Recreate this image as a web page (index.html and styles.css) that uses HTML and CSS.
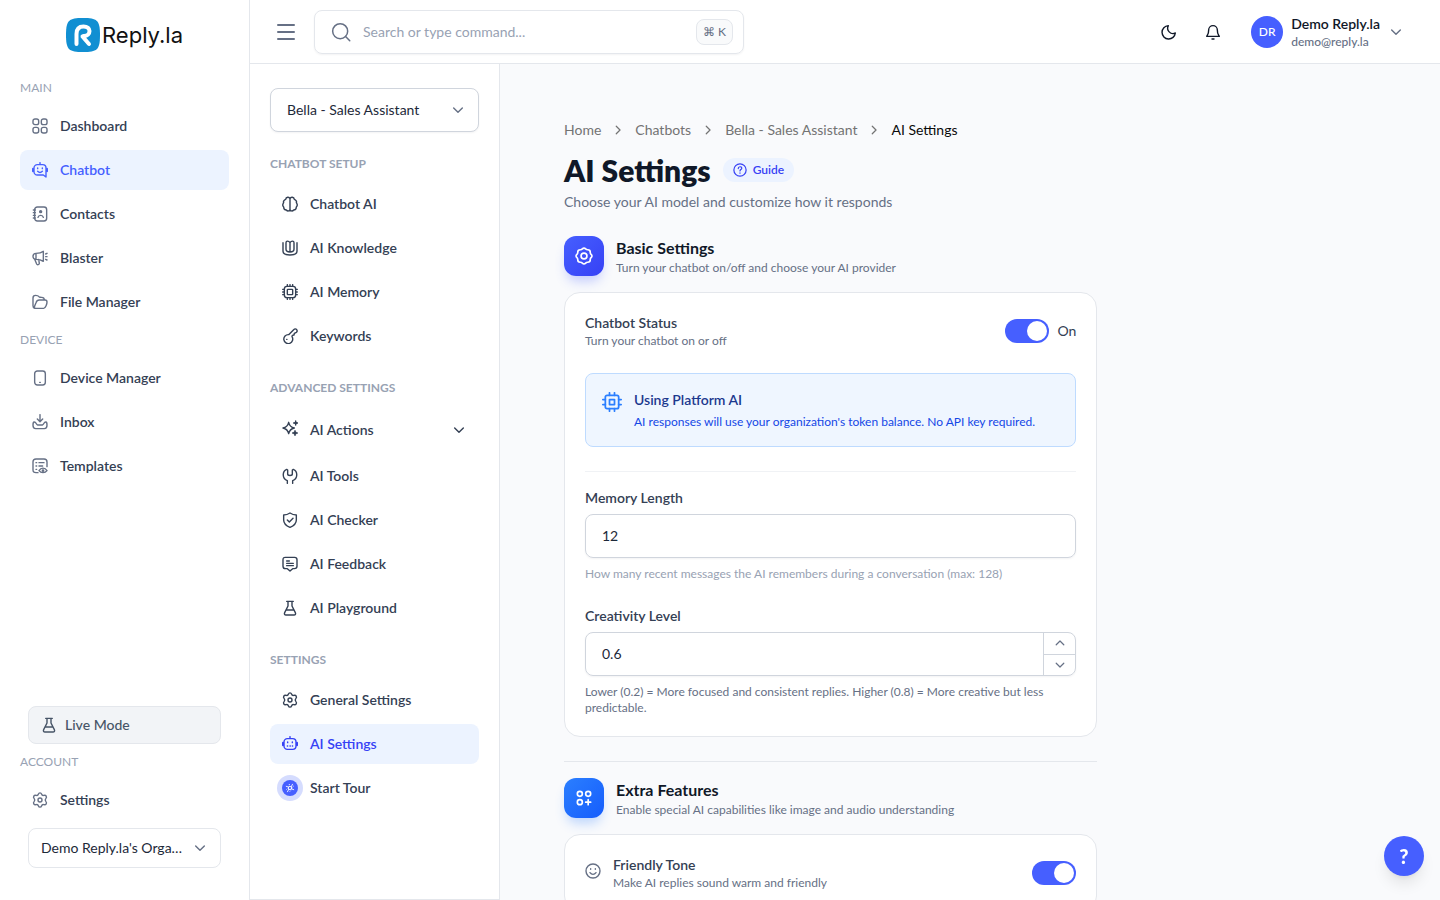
FILE: index.html
```html
<!DOCTYPE html>
<html lang="en">
    <head>
        <meta charset="utf-8" />
        <meta name="viewport" content="width=device-width, initial-scale=1" />
        <title>AI Settings | Reply.la</title>
        <link rel="stylesheet" href="styles.css">
    </head>
    <body>
        <!-- Icon sprite -->
        <svg class="sprite" aria-hidden="true">
            <symbol id="chevron" viewBox="0 0 24 24"><path d="M5.500 9 12 15.500 18.500 9" /></symbol>
            <symbol id="grid" viewBox="0 0 24 24"><rect x="1.500" y="1.500" width="8.500" height="8.500" rx="3" /><rect x="14" y="1.500" width="8.500" height="8.500" rx="3" /><rect x="1.500" y="14" width="8.500" height="8.500" rx="3" /><rect x="14" y="14" width="8.500" height="8.500" rx="3" /></symbol>
            <symbol id="chatbot" viewBox="0 0 24 24"><path d="M12 1v3M8 4h8a5 5 0 0 1 5 5v13.500L17 19.500H8a5 5 0 0 1-5-5V9a5 5 0 0 1 5-5zM8.500 14c2 2 5 2 7 0M8.500 9v1M15.500 9v1" /><path d="M1.500 10v4M22.500 10v4" stroke-width="3" /></symbol>
            <symbol id="contacts" viewBox="0 0 24 24"><rect x="4" y="1.500" width="18" height="21" rx="4" /><path d="M2 6h3M2 10h3M2 14h3M2 18h3M9 17c1-4 7-4 8 0" /><circle cx="13" cy="8.500" r="1.500" fill="currentColor" /></symbol>
            <symbol id="megaphone" viewBox="0 0 24 24"><path d="M17 2v15c-4-3-7-3-11-3-3 0-4.500-2-4.500-4.500S3 5 6 5c4 0 7 0 11-3zM4 14l3 7c1 2 4 1 4-1l-1-6M6 5v8M20.500 6l2-1M20.500 10h2M20.500 14l2 1" /></symbol>
            <symbol id="folder" viewBox="0 0 24 24"><path d="M4 21.500c-1.500-.5-2.500-2-2.500-4V6c0-3 1-4 4-4 3 0 3.500 0 5 2 1 1 2 1 4 1 3 0 4 1 4 4M5 21.500h12.500c3 0 5-7 5-9.500s-1-3-3-3H11c-3 0-4 1-5 4L4 18c-.5 1.500-.5 3.500 1 3.500z" /></symbol>
            <symbol id="phone" viewBox="0 0 24 24"><rect x="4" y="1.500" width="16" height="21" rx="4" /><path d="M11.500 18.500h1" /></symbol>
            <symbol id="inbox" viewBox="0 0 24 24"><path d="M12 1v10M8 7.500l4 4 4-4M3.500 12C1.500 12 1.500 14 1.500 17c0 4 1 5 4 5h13c3 0 4-1 4-5 0-3 0-5-2-5-3 0-2.500 4-5 4.500h-7C6 16 6.500 12 3.500 12z" /></symbol>
            <symbol id="template" viewBox="0 0 24 24"><path d="M9 22H6c-3 0-4.500-1-4.500-4.500v-12C1.500 3 3 1.500 6 1.500h12c3 0 4.500 1 4.500 4.500v7M6 7h1M6 12h1M6 17h1M10.500 7H18M10.500 12H16M10.500 19c3-5 9-5 12 0-3 4-9 4-12 0z" /><circle cx="16.500" cy="19" r="1" /></symbol>
            <symbol id="flask" viewBox="0 0 24 24"><path d="M7 2h10M9 2v7L4 19c-1 2 0 3.500 2 3.500h12c2 0 3-1.500 2-3.500L15 9V2M6.500 15h11" /></symbol>
            <symbol id="gear" viewBox="0 0 24 24"><path d="M9.500 3.500C10 2 10.500 1.300 12 1.300S14 2 14.500 3.500c.5 1.500 1.700 2 3.200 1.600 1.800-.5 2.600-.6 3.600 1.100s.6 2.400-.6 3.700c-1.200 1.400-1.200 2.800 0 4.200 1.200 1.300 1.600 2 .6 3.700s-1.800 1.600-3.600 1.100c-1.500-.4-2.700.1-3.200 1.600-.5 1.500-1 2.200-2.500 2.200s-2-.7-2.500-2.200c-.5-1.500-1.700-2-3.200-1.600-1.800.5-2.600.6-3.600-1.100s-.6-2.400.6-3.700c1.200-1.400 1.200-2.800 0-4.200-1.200-1.300-1.600-2-.6-3.700s1.800-1.600 3.600-1.100c1.500.4 2.700-.1 3.200-1.600z" /><circle cx="12" cy="12" r="3" /></symbol>
            <symbol id="cog" viewBox="0 0 24 24"><path d="M10 3.500c1.300-1.400 2.700-1.400 4 0 .8.900 1.400 1.100 2.600 1 1.900 0 2.900 1 2.900 2.900-.1 1.200.1 1.800 1 2.600 1.400 1.300 1.400 2.700 0 4-.9.800-1.100 1.400-1 2.600 0 1.900-1 2.900-2.900 2.900-1.200-.1-1.800.1-2.600 1-1.300 1.400-2.700 1.400-4 0-.8-.9-1.400-1.100-2.600-1-1.900 0-2.900-1-2.900-2.900.1-1.200-.1-1.800-1-2.600-1.400-1.300-1.400-2.700 0-4 .9-.8 1.100-1.400 1-2.600 0-1.900 1-2.900 2.900-2.900 1.200.1 1.800-.1 2.600-1z" /><circle cx="12" cy="12" r="3.500" /></symbol>
            <symbol id="brain" viewBox="0 0 24 24"><path d="M12 4c-1-3-6-3-6.500 1C3 6 1.500 8.500 2.500 10c-1.500 2-1.500 5 0 6.500C2.500 20 5 21 6.500 21c2 2.500 5 1.500 5.500-1zM12 4c1-3 6-3 6.500 1 2.500 1 4 3.500 3 5 1.500 2 1.500 5 0 6.500 0 3.500-2.500 4.500-4 4.500-2 2.500-5 1.500-5.500-1z" /></symbol>
            <symbol id="knowledge" viewBox="0 0 24 24"><path d="M12 4c-2-3-6-3-6 0v10c0 3 3 4 6 4s6-1 6-4V4c0-3-4-3-6 0zM12 4v14M1.500 4v13c0 3 4 5.500 10.500 5.500S22.500 20 22.500 17V4" /></symbol>
            <symbol id="memory" viewBox="0 0 24 24"><rect x="3.500" y="3.500" width="17" height="17" rx="4" /><rect x="8" y="8" width="8" height="8" rx="1" /><path d="M8 1v2.500M12 1v2.500M16 1v2.500M8 20.500V23M12 20.500V23M16 20.500V23M1 8h2.500M1 12h2.500M1 16h2.500M20.500 8H23M20.500 12H23M20.500 16H23" /></symbol>
            <symbol id="key" viewBox="0 0 24 24"><path d="m10 10 7.500-7.500c1.500-1.500 3.500-1.500 4.500 0s1 3-.5 4L18.500 8 18 10.500l-2.500.5-.5 2a6.700 6.700 0 1 1-5-3zM7 17h.5" /></symbol>
            <symbol id="sparkles" viewBox="0 0 24 24"><path d="M10 3.500c1.200 5.500 3 7.300 8.500 8.500-5.500 1.200-7.300 3-8.500 8.500-1.200-5.500-3-7.300-8.500-8.500 5.500-1.200 7.300-3 8.500-8.500zM20.500 1.500v6M17.500 4.500h6M19.500 16v7M16 19.500h7" /><circle cx="20.500" cy="4.500" r="1" /><circle cx="19.500" cy="19.500" r="1.500" /></symbol>
            <symbol id="wrench" viewBox="0 0 24 24"><path d="M8 23v-4C0 16 0 5 7 2l1.500 1v6c0 3 7 3 7 0V3L17 2c7 3 7 14-1 17v4" /></symbol>
            <symbol id="shield" viewBox="0 0 24 24"><path d="M12 1.500c3 2 6 3 9.500 3V12c0 6-4.500 9-9.500 11-5-2-9.500-5-9.500-11V4.500c3.500 0 6.500-1 9.500-3zM8 12l3 3 5.500-5.500" /></symbol>
            <symbol id="feedback" viewBox="0 0 24 24"><path d="M5 2h14c2.500 0 3.500 1 3.500 3.500v10c0 2.500-1 3.500-4 3.500H16l-4 3.500L8 19H5.500c-3 0-4-1-4-3.500v-10C1.500 3 2.500 2 5 2zM7 7.500h4M7 11h10M7 14.500h10" /></symbol>
            <symbol id="robot" viewBox="0 0 24 24"><path d="M12 1v3M8 4h8a5 5 0 0 1 5 5v6a5 5 0 0 1-5 5H8a5 5 0 0 1-5-5V9a5 5 0 0 1 5-5zM8.500 9v1M15.500 9v1M8 15h.5M12 15h.5M15.500 15h.5" /><path d="M1.500 10v4M22.500 10v4" stroke-width="3" /></symbol>
            <symbol id="chip" viewBox="0 0 24 24"><rect x="4" y="4" width="16" height="16" rx="2" /><rect x="9" y="9" width="6" height="6" /><path d="M9 1v3M15 1v3M9 20v3M15 20v3M1 9h3M1 15h3M20 9h3M20 15h3" /></symbol>
            <symbol id="moon" viewBox="0 0 24 24"><path d="M11 2.500A8 8 0 0 0 21.500 13.500 10 10 0 1 1 11 2.500z" /></symbol>
            <symbol id="bell" viewBox="0 0 24 24"><path d="M5.500 9a6.500 6.500 0 0 1 13 0c0 6 1 6 3 9.500h-19C4.500 15 5.500 15 5.500 9zM10.500 22.500h3" /></symbol>
            <symbol id="smile" viewBox="0 0 24 24"><circle cx="12" cy="12" r="10.500" /><path d="M7.500 14.500c2.500 3.500 6.500 3.500 9 0M8.500 8.500v1M15.500 8.500v1" /></symbol>
            <symbol id="apps" viewBox="0 0 24 24"><circle cx="7" cy="7" r="3" /><circle cx="17" cy="7" r="3" /><circle cx="7" cy="17" r="3" /><path d="M17 14v6M14 17h6" /></symbol>
        </svg>

        <div class="app">
            <!-- Main navigation -->
            <aside class="sidebar">
                <a class="logo" href="#">
                    <svg viewBox="0 0 34 34" aria-hidden="true">
                        <path d="M17 0c14 0 17 2 17 17s-3 17-17 17S0 32 0 17 3 0 17 0z" fill="#118fd2" />
                        <path d="M10.500 26V16c0-5 2.500-7.500 7-7.500 4 0 6 2 6 4.500 0 3-2 5-5.500 5l-1.500.500 6.500 7.500" fill="none" stroke="#fff" stroke-width="4" stroke-linecap="round" stroke-linejoin="round" />
                    </svg>
                    <span>Reply.la</span>
                </a>
                <nav class="menu">
                    <h3 class="menu-title">MAIN</h3>
                    <a class="item" href="#"><svg class="icon"><use href="#grid" /></svg>Dashboard</a>
                    <a class="item active" href="#"><svg class="icon"><use href="#chatbot" /></svg>Chatbot</a>
                    <a class="item" href="#"><svg class="icon"><use href="#contacts" /></svg>Contacts</a>
                    <a class="item" href="#"><svg class="icon"><use href="#megaphone" /></svg>Blaster</a>
                    <a class="item" href="#"><svg class="icon"><use href="#folder" /></svg>File Manager</a>
                    <h3 class="menu-title">DEVICE</h3>
                    <a class="item" href="#"><svg class="icon"><use href="#phone" /></svg>Device Manager</a>
                    <a class="item" href="#"><svg class="icon"><use href="#inbox" /></svg>Inbox</a>
                    <a class="item" href="#"><svg class="icon"><use href="#template" /></svg>Templates</a>
                </nav>
                <div class="menu account">
                    <button class="live-mode" type="button"><svg class="icon"><use href="#flask" /></svg>Live Mode</button>
                    <h3 class="menu-title">ACCOUNT</h3>
                    <a class="item" href="#"><svg class="icon"><use href="#gear" /></svg>Settings</a>
                    <div class="select org">
                        <select aria-label="Organization"><option>Demo Reply.la's Organization</option></select>
                        <svg class="icon"><use href="#chevron" /></svg>
                    </div>
                </div>
            </aside>

            <div class="page">
                <header class="topbar">
                    <button class="burger" type="button" aria-label="Toggle sidebar"><span></span><span></span><span></span></button>
                    <label class="search">
                        <svg class="icon" viewBox="0 0 24 24"><circle cx="11" cy="11" r="9" /><path d="m17.500 17.500 5 5" /></svg>
                        <input type="text" placeholder="Search or type command..." aria-label="Search" />
                        <kbd>⌘ K</kbd>
                    </label>
                    <div class="tools">
                        <button type="button" aria-label="Dark mode"><svg class="icon"><use href="#moon" /></svg></button>
                        <button type="button" aria-label="Notifications"><svg class="icon"><use href="#bell" /></svg></button>
                    </div>
                    <button class="user" type="button">
                        <span class="avatar">DR</span>
                        <span class="who"><strong>Demo Reply.la</strong><small>demo@reply.la</small></span>
                        <svg class="icon"><use href="#chevron" /></svg>
                    </button>
                </header>

                <div class="body">
                    <!-- Chatbot navigation -->
                    <aside class="subnav">
                        <div class="select">
                            <select aria-label="Chatbot"><option>Bella - Sales Assistant</option></select>
                            <svg class="icon"><use href="#chevron" /></svg>
                        </div>
                        <h3 class="menu-title">CHATBOT SETUP</h3>
                        <a class="item" href="#"><svg class="icon"><use href="#brain" /></svg>Chatbot AI</a>
                        <a class="item" href="#"><svg class="icon"><use href="#knowledge" /></svg>AI Knowledge</a>
                        <a class="item" href="#"><svg class="icon"><use href="#memory" /></svg>AI Memory</a>
                        <a class="item" href="#"><svg class="icon"><use href="#key" /></svg>Keywords</a>
                        <h3 class="menu-title">ADVANCED SETTINGS</h3>
                        <button class="item expand" type="button"><svg class="icon"><use href="#sparkles" /></svg>AI Actions<svg class="icon arrow"><use href="#chevron" /></svg></button>
                        <a class="item" href="#"><svg class="icon"><use href="#wrench" /></svg>AI Tools</a>
                        <a class="item" href="#"><svg class="icon"><use href="#shield" /></svg>AI Checker</a>
                        <a class="item" href="#"><svg class="icon"><use href="#feedback" /></svg>AI Feedback</a>
                        <a class="item" href="#"><svg class="icon"><use href="#flask" /></svg>AI Playground</a>
                        <h3 class="menu-title">SETTINGS</h3>
                        <a class="item" href="#"><svg class="icon"><use href="#gear" /></svg>General Settings</a>
                        <a class="item active" href="#"><svg class="icon"><use href="#robot" /></svg>AI Settings</a>
                        <a class="item" href="#"><span class="tour"><svg class="icon" viewBox="0 0 24 24"><circle cx="12" cy="12" r="4" /><path d="m15 9 3-6M15 14l6 2M9 15l-3 6M9 10 3 8M19 9l1-1M4 15l1-1M12 20l1-1M10 4h1" /></svg></span>Start Tour</a>
                    </aside>

                    <main class="content">
                        <nav class="crumbs" aria-label="Breadcrumb">
                            <a href="#">Home</a>
                            <svg class="icon"><use href="#chevron" /></svg>
                            <a href="#">Chatbots</a>
                            <svg class="icon"><use href="#chevron" /></svg>
                            <a href="#">Bella - Sales Assistant</a>
                            <svg class="icon"><use href="#chevron" /></svg>
                            <span>AI Settings</span>
                        </nav>
                        <div class="heading">
                            <h1>AI Settings</h1>
                            <button class="guide" type="button">
                                <svg class="icon" viewBox="0 0 24 24"><circle cx="12" cy="12" r="10.500" /><path d="M9 9.500c0-4 6-4 6-.5 0 2.500-3 2-3 4.500M12 17v.5" /></svg>
                                Guide
                            </button>
                        </div>
                        <p class="lead">Choose your AI model and customize how it responds</p>

                        <div class="columns">
                            <div class="column">
                                <section>
                                    <div class="section-head">
                                        <span class="badge indigo"><svg class="icon"><use href="#cog" /></svg></span>
                                        <div>
                                            <h2>Basic Settings</h2>
                                            <p>Turn your chatbot on/off and choose your AI provider</p>
                                        </div>
                                    </div>
                                    <div class="card">
                                        <div class="row">
                                            <label class="text" for="status">Chatbot Status<small>Turn your chatbot on or off</small></label>
                                            <input class="switch" type="checkbox" id="status" checked />
                                            <span>On</span>
                                        </div>
                                        <div class="notice">
                                            <svg class="icon"><use href="#chip" /></svg>
                                            <div>
                                                <h4>Using Platform AI</h4>
                                                <p>AI responses will use your organization's token balance. No API key required.</p>
                                            </div>
                                        </div>
                                        <hr />
                                        <div class="field">
                                            <label for="memory-length">Memory Length</label>
                                            <div class="number"><input type="number" id="memory-length" value="12" max="128" /></div>
                                            <p class="light">How many recent messages the AI remembers during a conversation (max: 128)</p>
                                        </div>
                                        <div class="field">
                                            <label for="creativity">Creativity Level</label>
                                            <div class="number">
                                                <input type="number" id="creativity" value="0.6" step="0.1" />
                                                <div class="stepper">
                                                    <button type="button" aria-label="Increase"><svg class="icon up"><use href="#chevron" /></svg></button>
                                                    <button type="button" aria-label="Decrease"><svg class="icon"><use href="#chevron" /></svg></button>
                                                </div>
                                            </div>
                                            <p>Lower (0.2) = More focused and consistent replies. Higher (0.8) = More creative but less predictable.</p>
                                        </div>
                                    </div>
                                </section>
                                <section>
                                    <div class="section-head">
                                        <span class="badge blue"><svg class="icon"><use href="#apps" /></svg></span>
                                        <div>
                                            <h2>Extra Features</h2>
                                            <p>Enable special AI capabilities like image and audio understanding</p>
                                        </div>
                                    </div>
                                    <div class="card">
                                        <div class="row">
                                            <svg class="icon"><use href="#smile" /></svg>
                                            <label class="text" for="friendly">Friendly Tone<small>Make AI replies sound warm and friendly</small></label>
                                            <input class="switch" type="checkbox" id="friendly" checked />
                                        </div>
                                    </div>
                                </section>
                            </div>
                        </div>
                    </main>
                </div>
            </div>
        </div>
        <button class="help" type="button" aria-label="Help">?</button>
    </body>
</html>
```

FILE: styles.css
```css
* {
    box-sizing: border-box;
}
body {
    background-color: #f9fafc;
    color: #344054;
    font-family: Lato, "Liberation Sans", sans-serif;
    font-size: 14px;
    line-height: 20px;
    margin: 0;
}
h1, h2, h3, h4, p {
    margin: 0;
}
a {
    color: inherit;
    text-decoration: none;
}
button, input, select {
    appearance: none;
    background: none;
    border: 0;
    color: inherit;
    font: inherit;
    margin: 0;
    padding: 0;
}
small {
    display: block;
    font-size: 12px;
    line-height: 16px;
}
hr {
    border: 0;
    border-top: 1px solid #f0f2f5;
    margin: 0;
}
.sprite {
    display: none;
}
.icon {
    fill: none;
    flex: none;
    height: 16px;
    stroke: currentColor;
    stroke-linecap: round;
    stroke-linejoin: round;
    stroke-width: 2.1;
    width: 16px;
}

.app {
    display: flex;
    height: 100vh;
}
.page {
    display: flex;
    flex: 1;
    flex-direction: column;
    min-width: 0;
}
.body {
    display: flex;
    flex: 1;
    min-height: 0;
}

/* Sidebars */
.sidebar, .subnav {
    background-color: #fff;
    border-right: 1px solid #e4e7ec;
    display: flex;
    flex: none;
    flex-direction: column;
    padding: 0 20px;
    width: 250px;
}
.logo {
    align-items: center;
    color: #111;
    display: flex;
    font-family: Inter, sans-serif;
    font-size: 22px;
    font-weight: 400;
    gap: 2px;
    justify-content: center;
    padding: 18px 0;
}
.logo svg {
    height: 34px;
    width: 34px;
}
.menu {
    display: flex;
    flex-direction: column;
    gap: 4px;
}
.menu-title {
    color: #98a2b3;
    font-size: 12px;
    font-weight: 400;
    line-height: 20px;
}
.menu .menu-title {
    margin: 4px 0;
}
.logo + .menu .menu-title:first-child {
    margin-top: 8px;
}
.item {
    align-items: center;
    border-radius: 8px;
    color: #344054;
    display: flex;
    flex: none;
    font-weight: 600;
    gap: 12px;
    height: 40px;
    padding: 0 12px;
}
.sidebar .item .icon {
    color: #667085;
}
.item.active {
    background-color: #ecf3ff;
    color: #3641f5;
}
.sidebar .item.active, .sidebar .item.active .icon {
    color: #465fff;
}
.account {
    margin-top: auto;
    padding-bottom: 32px;
}
.live-mode {
    align-items: center;
    background-color: #f2f4f7;
    border: 1px solid #e4e7ec;
    border-radius: 8px;
    color: #475467;
    display: flex;
    font-weight: 500;
    gap: 8px;
    height: 38px;
    margin: 0 8px;
    padding: 0 12px;
}
.select {
    align-items: center;
    background-color: #fff;
    border: 1px solid #d0d5dd;
    border-radius: 8px;
    box-shadow: 0 1px 2px rgba(16, 24, 40, 0.05);
    color: #1d2939;
    display: flex;
    flex: none;
    height: 44px;
    padding: 0 12px 0 16px;
}
.select select {
    flex: 1;
    min-width: 0;
    overflow: hidden;
    text-overflow: ellipsis;
    white-space: nowrap;
}
.select .icon {
    color: #667085;
}
.org {
    border-color: #e4e7ec;
    box-shadow: none;
    gap: 4px;
    height: 40px;
    margin: 4px 8px 0;
    padding: 0 12px;
}

.subnav {
    border-bottom: 1px solid #e4e7ec;
    gap: 4px;
    overflow: hidden;
    padding-top: 24px;
}
.subnav .menu-title {
    font-weight: 700;
    line-height: 16px;
    margin: 20px 0 8px;
}
.expand {
    height: 44px;
}
.expand .icon:first-child {
    margin-bottom: 4px;
}
.expand .arrow {
    margin-left: auto;
}
.tour {
    align-items: center;
    background-color: #465fff;
    border-radius: 50%;
    box-shadow: 0 0 0 5px #d5dcfe;
    color: #fff;
    display: flex;
    height: 16px;
    justify-content: center;
    width: 16px;
}
.tour .icon {
    height: 10px;
    width: 10px;
}

/* Top bar */
.topbar {
    align-items: center;
    background-color: #fff;
    border-bottom: 1px solid #e4e7ec;
    display: flex;
    flex: none;
    height: 64px;
    padding: 0 36px 0 24px;
}
.burger {
    display: flex;
    flex-direction: column;
    gap: 5px;
    margin-right: 16px;
    padding: 0 3px;
    width: 24px;
}
.burger span {
    background-color: #667085;
    border-radius: 1px;
    height: 2px;
}
.search {
    align-items: center;
    border: 1px solid #e4e7ec;
    border-radius: 8px;
    box-shadow: 0 1px 2px rgba(16, 24, 40, 0.05);
    color: #667085;
    display: flex;
    gap: 12px;
    height: 44px;
    padding: 0 10px 0 16px;
    width: 430px;
}
.search .icon {
    height: 20px;
    stroke-width: 1.8;
    width: 20px;
}
.search input {
    flex: 1;
    min-width: 0;
}
.search input::placeholder {
    color: #98a2b3;
}
.search kbd {
    background-color: #f9fafb;
    border: 1px solid #e4e7ec;
    border-radius: 8px;
    font-family: inherit;
    font-size: 12px;
    line-height: 24px;
    padding: 0 6px;
}
.tools {
    color: #101828;
    display: flex;
    gap: 28px;
    margin-left: auto;
    margin-right: 30px;
}
.tools button {
    display: flex;
}
.user {
    align-items: center;
    display: flex;
    gap: 8px;
    text-align: left;
}
.avatar {
    background-color: #465fff;
    border-radius: 50%;
    color: #fff;
    font-size: 12px;
    font-weight: 500;
    line-height: 32px;
    text-align: center;
    width: 32px;
}
.who strong {
    color: #101828;
    display: block;
    font-weight: 600;
}
.who small {
    font-weight: 500;
}
.who small, .user .icon {
    color: #667085;
}

/* Content */
.content {
    flex: 1;
    min-width: 0;
    overflow-y: auto;
    padding: 56px 64px;
    scrollbar-width: none;
}
.crumbs {
    align-items: center;
    color: #737373;
    display: flex;
    gap: 10px;
}
.crumbs .icon {
    height: 14px;
    transform: rotate(-90deg);
    width: 14px;
}
.crumbs span {
    color: #0a0a0a;
}
.heading {
    align-items: center;
    display: flex;
    gap: 12px;
    margin-top: 12px;
}
h1 {
    color: #101828;
    font-size: 30px;
    font-weight: 800;
    line-height: 36px;
}
.guide {
    align-items: center;
    background-color: #ecf3ff;
    border-radius: 12px;
    color: #3641f5;
    display: flex;
    font-size: 12px;
    font-weight: 600;
    gap: 6px;
    height: 24px;
    padding: 0 10px;
}
.guide .icon {
    height: 14px;
    width: 14px;
}
.lead {
    color: #667085;
    margin-top: 4px;
}
.columns {
    display: grid;
    gap: 24px;
    grid-template-columns: repeat(3, 1fr);
    margin-top: 24px;
}
.column {
    grid-column: span 2;
}
section + section {
    border-top: 1px solid #e4e7ec;
    margin-top: 24px;
    padding-top: 16px;
}
.section-head {
    align-items: center;
    color: #667085;
    display: flex;
    font-size: 12px;
    gap: 12px;
    line-height: 16px;
    margin-bottom: 16px;
}
.section-head h2 {
    color: #101828;
    font-size: 16px;
    font-weight: 700;
    line-height: 24px;
}
.badge {
    align-items: center;
    border-radius: 12px;
    color: #fff;
    display: flex;
    height: 40px;
    justify-content: center;
    width: 40px;
}
.badge .icon {
    height: 20px;
    stroke-width: 2;
    width: 20px;
}
.indigo {
    background-image: linear-gradient(135deg, #465fff, #3641f5);
    box-shadow: 0 8px 12px -3px rgba(70, 95, 255, 0.3);
}
.blue {
    background-image: linear-gradient(135deg, #2b7fff, #155dfc);
    box-shadow: 0 8px 12px -3px rgba(43, 127, 255, 0.3);
}
.card {
    background-color: #fff;
    border: 1px solid #e4e7ec;
    border-radius: 16px;
    padding: 20px;
}
.row {
    align-items: center;
    display: flex;
    gap: 8px;
}
.row > .icon {
    color: #667085;
    margin-bottom: 4px;
    margin-right: 4px;
}
.text {
    flex: 1;
    font-weight: 600;
}
.text small {
    color: #667085;
    font-weight: 400;
}
.switch {
    background-color: #d0d5dd;
    border-radius: 12px;
    display: flex;
    height: 24px;
    padding: 2px;
    width: 44px;
}
.switch::before {
    background-color: #fff;
    border-radius: 50%;
    content: "";
    height: 20px;
    width: 20px;
}
.switch:checked {
    background-color: #465fff;
    justify-content: flex-end;
}
.notice {
    background-color: #eff6ff;
    border: 1px solid #bedbff;
    border-radius: 8px;
    color: #1447e6;
    display: flex;
    font-size: 12px;
    gap: 12px;
    line-height: 16px;
    margin: 24px 0;
    padding: 16px;
}
.notice .icon {
    color: #2b7fff;
    height: 20px;
    margin-top: 2px;
    width: 20px;
}
.notice h4 {
    color: #1c398e;
    font-size: 14px;
    font-weight: 600;
    line-height: 20px;
    margin-bottom: 4px;
}
.field {
    margin-top: 16px;
}
.field + .field {
    margin-top: 24px;
}
.field label {
    display: block;
    font-weight: 600;
    margin-bottom: 6px;
}
.field p {
    color: #667085;
    font-size: 12px;
    line-height: 16px;
    margin-top: 8px;
}
.field .light {
    color: #98a2b3;
}
.number {
    border: 1px solid #d0d5dd;
    border-radius: 8px;
    box-shadow: 0 1px 2px rgba(16, 24, 40, 0.05);
    color: #1d2939;
    display: flex;
    height: 44px;
}
.number input {
    appearance: textfield;
    flex: 1;
    min-width: 0;
    padding: 0 16px;
}
.stepper {
    border-left: 1px solid #d0d5dd;
    color: #667085;
    display: flex;
    flex-direction: column;
    width: 32px;
}
.stepper button {
    align-items: center;
    display: flex;
    flex: 1;
    justify-content: center;
}
.stepper button + button {
    border-top: 1px solid #d0d5dd;
}
.stepper .icon {
    height: 14px;
    width: 14px;
}
.up {
    transform: rotate(180deg);
}

/* Floating help button */
.help {
    background-color: #465fff;
    border-radius: 50%;
    bottom: 24px;
    box-shadow: 0 10px 15px -3px rgba(0, 0, 0, 0.1), 0 4px 6px -4px rgba(0, 0, 0, 0.1);
    color: #fff;
    font-size: 20px;
    font-weight: 900;
    height: 40px;
    position: fixed;
    right: 16px;
    width: 40px;
}
```
